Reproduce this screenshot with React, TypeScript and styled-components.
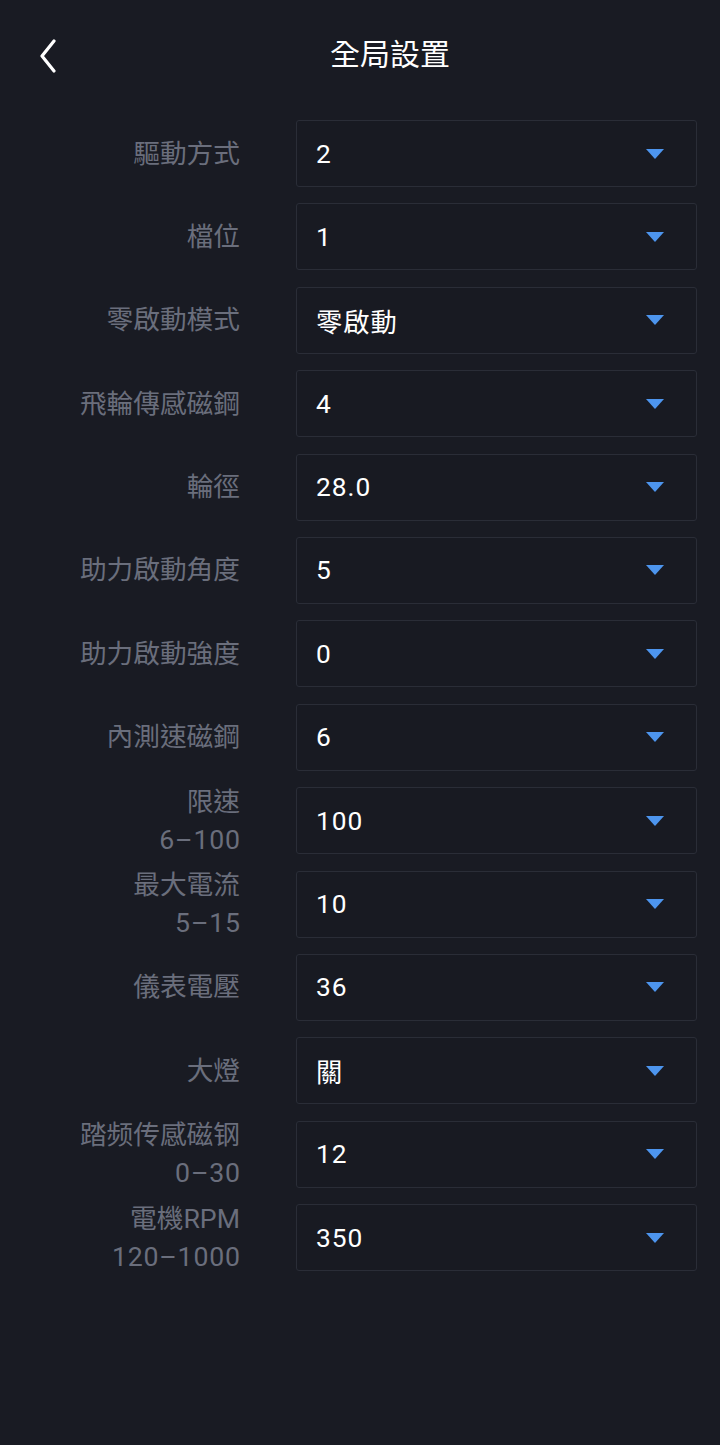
import React from 'react';
import styled, { createGlobalStyle } from 'styled-components';

const GlobalStyle = createGlobalStyle`
  html, body {
    margin: 0;
    padding: 0;
    background: #191b23;
  }
  body {
    font-family: Roboto, "Noto Sans CJK TC", "Noto Sans", sans-serif;
  }
`;

const Page = styled.div`
  width: 720px;
  min-height: 1445px;
  background: #191b23;
  color: #fff;
`;

const Header = styled.div`
  position: relative;
  height: 120px;
  display: flex;
  justify-content: center;
`;

const BackButton = styled.button`
  position: absolute;
  left: 32px;
  top: 36px;
  width: 32px;
  height: 40px;
  padding: 0;
  border: none;
  background: none;
  cursor: pointer;
  display: flex;
  align-items: center;
  justify-content: center;
`;

const Title = styled.h1`
  margin: 35px 0 0 60px;
  height: 40px;
  font-size: 30px;
  font-weight: 400;
  line-height: 40px;
  color: #fff;
`;

const Form = styled.div`
  display: grid;
  grid-template-columns: 240px 1fr;
  column-gap: 56px;
  row-gap: 16.4px;
  padding-right: 23px;
`;

const Label = styled.div`
  height: 67px;
  display: flex;
  flex-direction: column;
  justify-content: center;
  align-items: flex-end;
  text-align: right;
  font-size: 26.7px;
  line-height: 38px;
  color: #6a6e7c;
  white-space: nowrap;
`;

const Hint = styled.span`
  letter-spacing: 0.8px;
  margin-right: -0.8px;
`;

const Select = styled.div`
  height: 67px;
  box-sizing: border-box;
  border: 1px solid #2a2d37;
  border-radius: 3px;
  background: #181a22;
  display: flex;
  align-items: center;
  justify-content: space-between;
  padding: 0 32px 0 19px;
  cursor: pointer;
`;

const Value = styled.span`
  font-size: 26.3px;
  letter-spacing: 1px;
  color: #fff;
`;

const Arrow = styled.span`
  width: 0;
  height: 0;
  border-left: 9px solid transparent;
  border-right: 9px solid transparent;
  border-top: 10px solid #4d95ee;
`;

type Row = { label: string; hint?: string; value: string };

const rows: Row[] = [
  { label: '驅動方式', value: '2' },
  { label: '檔位', value: '1' },
  { label: '零啟動模式', value: '零啟動' },
  { label: '飛輪傳感磁鋼', value: '4' },
  { label: '輪徑', value: '28.0' },
  { label: '助力啟動角度', value: '5' },
  { label: '助力啟動強度', value: '0' },
  { label: '內測速磁鋼', value: '6' },
  { label: '限速', hint: '6–100', value: '100' },
  { label: '最大電流', hint: '5–15', value: '10' },
  { label: '儀表電壓', value: '36' },
  { label: '大燈', value: '關' },
  { label: '踏频传感磁钢', hint: '0–30', value: '12' },
  { label: '電機RPM', hint: '120–1000', value: '350' },
];

const App: React.FC = () => {
  return (
    <Page>
      <GlobalStyle />
      <Header>
        <BackButton aria-label="back">
          <svg width="20" height="34" viewBox="0 0 20 34" fill="none">
            <path d="M16 2 L4 17 L16 32" stroke="#fff" strokeWidth="3.2" strokeLinecap="round" strokeLinejoin="round" />
          </svg>
        </BackButton>
        <Title>全局設置</Title>
      </Header>
      <Form>
        {rows.map((r) => (
          <React.Fragment key={r.label}>
            <Label>
              <span>{r.label}</span>
              {r.hint && <Hint>{r.hint}</Hint>}
            </Label>
            <Select>
              <Value>{r.value}</Value>
              <Arrow />
            </Select>
          </React.Fragment>
        ))}
      </Form>
    </Page>
  );
};

export default App;
